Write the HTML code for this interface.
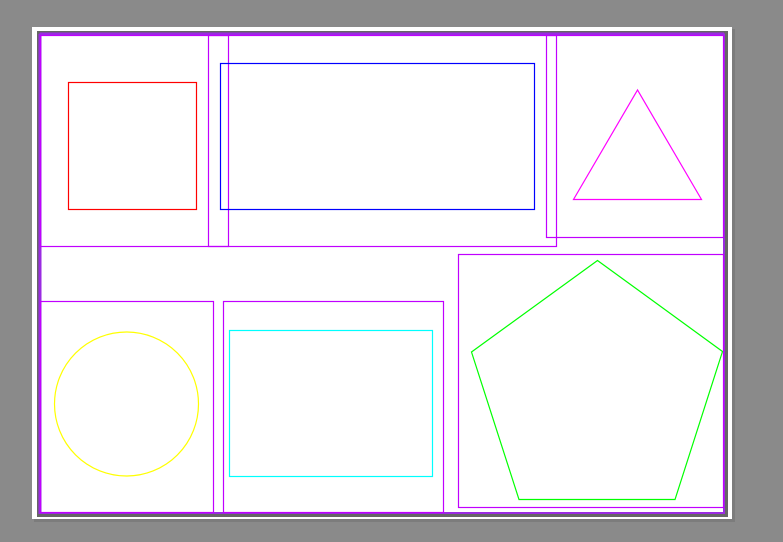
<!DOCTYPE html>
<html><head><meta charset="utf-8"><style>
html,body{margin:0;padding:0;width:783px;height:542px;overflow:hidden;background:#8a8a8a}
svg{display:block}
</style></head><body>
<svg width="783" height="542" viewBox="0 0 783 542" xmlns="http://www.w3.org/2000/svg">
<rect x="0" y="0" width="783" height="542" fill="#8a8a8a"/>
<rect x="34" y="29" width="701" height="493" fill="#6e6e6e" opacity="0.5"/>
<rect x="32" y="27" width="700" height="492" fill="#ffffff"/>
<rect x="39" y="33" width="687" height="482" fill="none" stroke="#666" stroke-width="4"/>
<rect x="724" y="34" width="3.5" height="482" fill="#666"/>
<rect x="39" y="513" width="688" height="3.5" fill="#666"/>
<g fill="none" stroke-width="1.2">
<rect x="40" y="34.5" width="684" height="478.5" stroke="#9a2be2" stroke-width="2"/>
<line x1="40" y1="34" x2="724" y2="34" stroke="#9a2be2" stroke-width="3"/>
<line x1="40" y1="34" x2="40" y2="514" stroke="#9a2be2" stroke-width="3"/>
<rect x="40.5" y="35.5" width="188" height="211" stroke="#c000ff"/>
<rect x="208.5" y="35.5" width="348" height="211" stroke="#c000ff"/>
<rect x="546.5" y="35.5" width="177" height="202" stroke="#c000ff"/>
<rect x="458.5" y="254.5" width="265" height="253" stroke="#c000ff"/>
<rect x="40.5" y="301.5" width="173" height="211" stroke="#c000ff"/>
<rect x="223.5" y="301.5" width="220" height="211" stroke="#c000ff"/>
<rect x="68.5" y="82.5" width="128" height="127" stroke="#ff0000"/>
<rect x="220.5" y="63.5" width="314" height="146" stroke="#0000ff"/>
<polygon points="637.5,90 573.5,199.5 701.5,199.5" stroke="#ff00ff"/>
<circle cx="126.5" cy="404" r="72" stroke="#ffff00"/>
<rect x="229.5" y="330.5" width="203" height="146" stroke="#00ffff"/>
<polygon points="597.5,260.5 722.5,351.5 675,499.5 519,499.5 471.5,352" stroke="#00ff00"/>
</g>
</svg>
</body></html>
